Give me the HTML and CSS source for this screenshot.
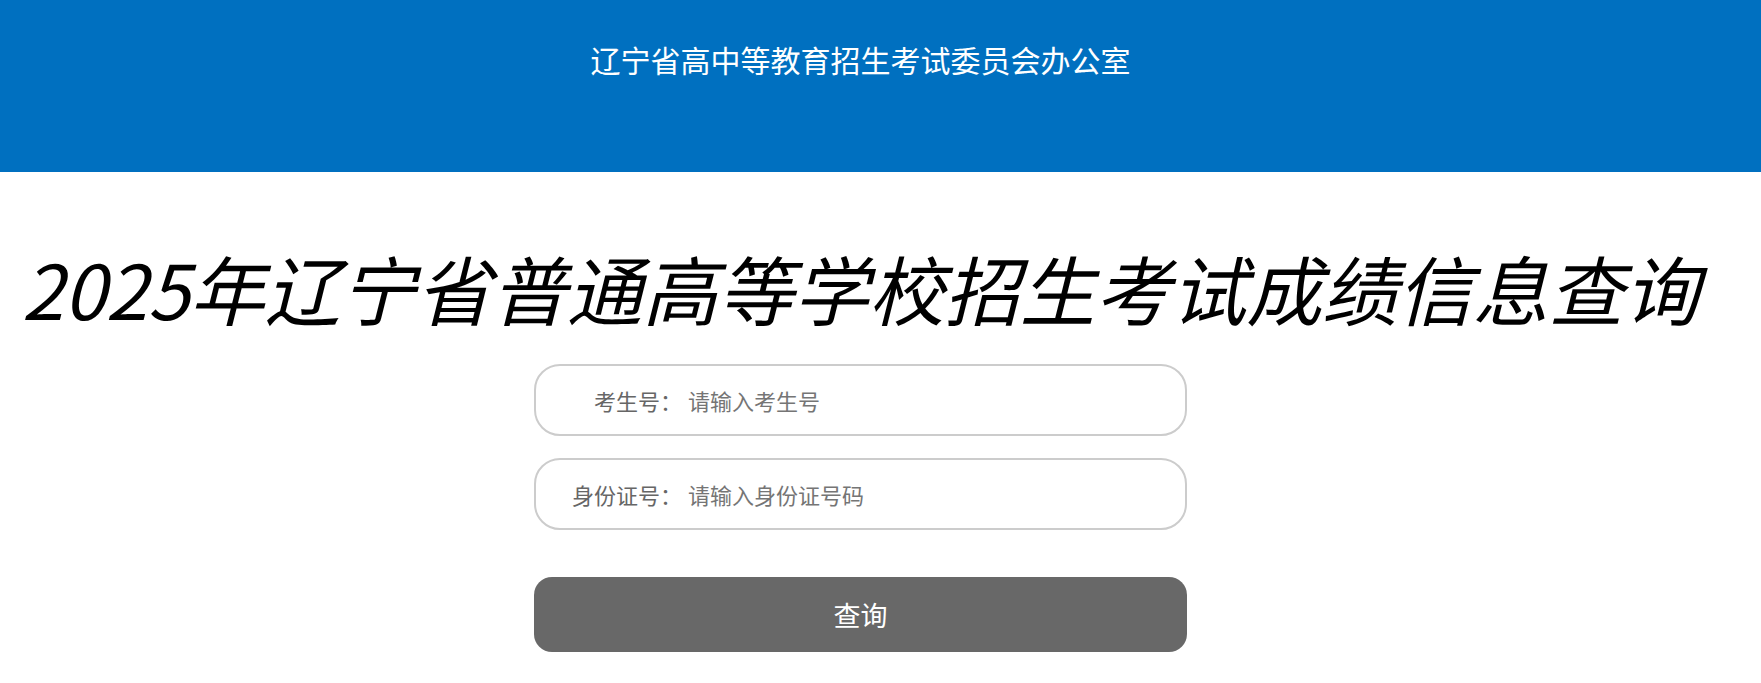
FILE: index.html
```html
<!DOCTYPE html>
<html lang="zh-CN">
<head>
    <meta charset="UTF-8">
    <meta name="viewport" content="width=device-width, initial-scale=1.0">
    <title>2025年辽宁省普通高等学校招生考试成绩信息查询</title>
    <link rel="stylesheet" href="styles.css">
</head>
<body>

    <!-- top bar -->
    <div class="top">
        <p class="top-name">辽宁省高中等教育招生考试委员会办公室</p>
    </div>

    <div class="main">
        <h1 class="title">2025年辽宁省普通高等学校招生考试成绩信息查询</h1>

        <!-- query form -->
        <form class="query" onsubmit="return false">
            <div class="field">
                <label class="field-name" for="ksh">考生号：</label>
                <input class="field-in" type="text" id="ksh" placeholder="请输入考生号">
            </div>
            <div class="field">
                <label class="field-name" for="sfzh">身份证号：</label>
                <input class="field-in" type="text" id="sfzh" placeholder="请输入身份证号码">
            </div>
            <button class="btn" type="submit">查询</button>
        </form>
    </div>

</body>
</html>
```

FILE: styles.css
```css
body{
  margin: 0;
  background-color: #fff;
  font-family: "Noto Sans CJK SC", "Noto Sans", sans-serif;
}

.top{
  background-color: #0070c0;
  height: 172px;
  box-sizing: border-box;
  padding: 40px 40px 0 0;
}

.top-name{
  margin: 0;
  color: white;
  font-size: 30px;
  line-height: 38px;
  text-align: center;
}

.main{
  padding-right: 40px;
}

.title{
  margin: 65px 0 0 0;
  font-size: 75.5px;
  font-style: italic;
  font-weight: normal;
  line-height: 100px;
  text-align: center;
  white-space: nowrap;
  color: #000;
}

.query{
  width: 653px;
  margin: 27px auto 0;
  display: flex;
  flex-direction: column;
  gap: 22px;
}

.field{
  height: 72px;
  box-sizing: border-box;
  border: 2px solid #cccccc;
  border-radius: 26px;
  display: flex;
  align-items: center;
}

.field-name{
  width: 146px;
  text-align: right;
  color: #666;
  font-size: 22px;
}

.field-in{
  flex: 1;
  margin: 0 20px 0 6px;
  border: none;
  outline: none;
  background: transparent;
  font-family: inherit;
  font-size: 22px;
  color: #333;
  padding: 0;
}

.field-in::placeholder{
  color: #757575;
}

.btn{
  margin-top: 25px;
  height: 75px;
  border: none;
  border-radius: 18px;
  background-color: #686868;
  color: white;
  font-family: inherit;
  font-size: 27px;
  cursor: pointer;
}
```
